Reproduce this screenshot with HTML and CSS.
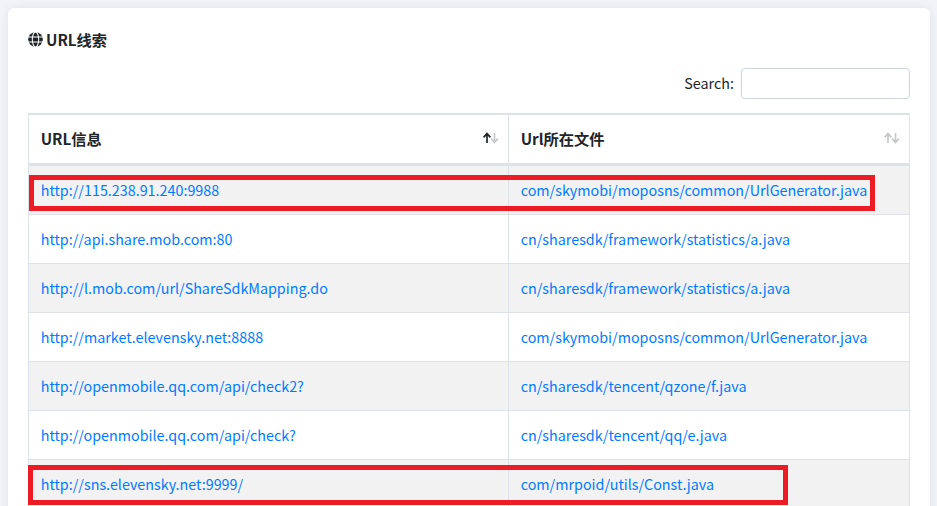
FILE: index.html
```html
<!DOCTYPE html>
<html lang="zh">
<head>
<meta charset="utf-8">
<title>URL线索</title>
<link rel="stylesheet" href="styles.css">
</head>
<body>
<main class="card">
  <h5 class="title">
    <svg class="globe" viewBox="0 0 16 16" aria-hidden="true">
      <circle cx="8" cy="8" r="7.8" fill="#212529"/>
      <g fill="none" stroke="#fff" stroke-width="1.1">
        <ellipse cx="8" cy="8" rx="3.4" ry="8"/>
        <path d="M0 5.3h16M0 10.7h16"/>
      </g>
    </svg>
    <span>URL线索</span>
  </h5>
  <div class="search">
    <label for="q">Search:</label>
    <input id="q" class="search-input" type="search">
  </div>
  <div class="table-wrap">
    <table class="data">
      <colgroup><col class="col-a"><col class="col-b"></colgroup>
      <thead>
        <tr>
          <th><div class="th-in"><span>URL信息</span>
            <svg class="sort" viewBox="0 0 18 12" aria-hidden="true">
              <path class="on" d="M5 11V2M1.6 5.4 5 1.6 8.4 5.4"/>
              <path class="off" d="M12.5 1v9M9.1 6.6 12.5 10.4 15.9 6.6"/>
            </svg></div></th>
          <th><div class="th-in"><span>Url所在文件</span>
            <svg class="sort" viewBox="0 0 18 12" aria-hidden="true">
              <path class="off" d="M5 11V2M1.6 5.4 5 1.6 8.4 5.4"/>
              <path class="off" d="M12.5 1v9M9.1 6.6 12.5 10.4 15.9 6.6"/>
            </svg></div></th>
        </tr>
      </thead>
      <tbody>
        <tr class="first"><td><a href="#">http://115.238.91.240:9988</a></td><td><a href="#">com/skymobi/moposns/common/UrlGenerator.java</a></td></tr>
        <tr><td><a href="#">http://api.share.mob.com:80</a></td><td><a href="#">cn/sharesdk/framework/statistics/a.java</a></td></tr>
        <tr><td><a href="#">http://l.mob.com/url/ShareSdkMapping.do</a></td><td><a href="#">cn/sharesdk/framework/statistics/a.java</a></td></tr>
        <tr><td><a href="#">http://market.elevensky.net:8888</a></td><td><a href="#">com/skymobi/moposns/common/UrlGenerator.java</a></td></tr>
        <tr><td><a href="#">http://openmobile.qq.com/api/check2?</a></td><td><a href="#">cn/sharesdk/tencent/qzone/f.java</a></td></tr>
        <tr><td><a href="#">http://openmobile.qq.com/api/check?</a></td><td><a href="#">cn/sharesdk/tencent/qq/e.java</a></td></tr>
        <tr><td><a href="#">http://sns.elevensky.net:9999/</a></td><td><a href="#">com/mrpoid/utils/Const.java</a></td></tr>
      </tbody>
    </table>
    <div class="mark mark-one"></div>
    <div class="mark mark-two"></div>
  </div>
</main>
</body>
</html>
```
FILE: styles.css
```css
* { box-sizing: border-box; }
html, body { margin: 0; height: 100%; overflow: hidden; }
body {
  background: #f2f3f8;
  padding: 8px 7px 0 8px;
  font-family: "Noto Sans CJK SC", "Noto Sans", sans-serif;
  font-size: 14.33px;
  color: #212529;
}
.card {
  background: #fff;
  border-radius: 6px;
  padding: 19px 20px 0;
  height: 600px;
  box-shadow: 0 0 10px rgba(0, 0, 0, 0.07);
}
.title {
  margin: 0;
  display: flex;
  align-items: center;
  gap: 3px;
  font-size: 15.25px;
  font-weight: 700;
  line-height: 24px;
}
.globe { width: 15px; height: 15px; flex: none; }
.search {
  display: flex;
  justify-content: flex-end;
  align-items: center;
  gap: 7px;
  margin-top: 17px;
  height: 31px;
}
.search label { font-size: 14.33px; position: relative; top: -1px; }
.search-input {
  width: 169px;
  height: 31px;
  border: 1px solid #ced4da;
  border-radius: 4px;
  background: #fff;
}
.table-wrap { position: relative; margin-top: 14px; }
.data {
  width: 882px;
  border-collapse: collapse;
  table-layout: fixed;
  border: 1px solid #dee2e6;
  border-top-width: 2px;
}
.col-a { width: 480px; }
.data th, .data td { border: 1px solid #dee2e6; padding: 0 12px 0 11.7px; text-align: left; }
.data th {
  height: 50px;
  padding-bottom: 2px;
  border-bottom-width: 3px;
  border-top-width: 2px;
  font-size: 15.25px;
  font-weight: 700;
}
.data td { height: 49px; }
.data .first td { height: 50px; }
.data tbody tr:nth-child(odd) { background: #f2f2f2; }
.th-in { display: flex; justify-content: space-between; align-items: center; }
.sort { width: 18px; height: 12px; flex: none; margin-right: -4px; }
.sort path { fill: none; stroke-width: 1.7; }
.sort .on { stroke: #212529; }
.sort .off { stroke: #c6c8ca; }
.data a { color: #007bff; text-decoration: none; }
.mark { position: absolute; border: 5px solid #ed1c24; }
.mark-one { left: 1px; top: 62px; width: 846px; height: 36px; }
.mark-two { left: 0; top: 352px; width: 760px; height: 40px; }
```
